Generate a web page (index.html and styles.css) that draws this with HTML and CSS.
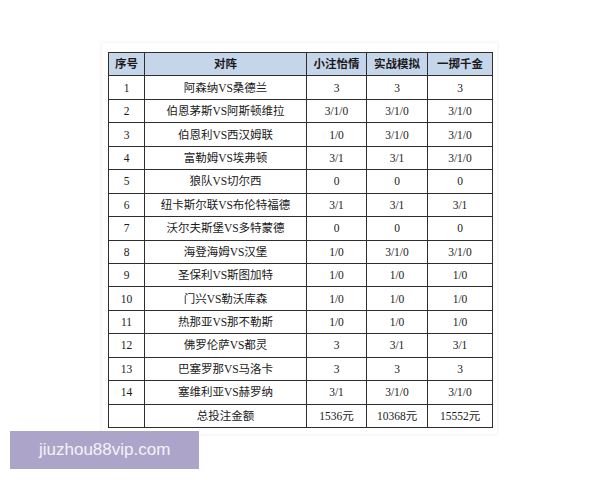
FILE: index.html
```html
<!DOCTYPE html>
<html lang="zh">
<head>
<meta charset="utf-8">
<link rel="stylesheet" href="styles.css">
</head>
<body>
<div class="frame">
<table class="bets">
<colgroup>
<col class="c-no"><col class="c-match"><col class="c-a"><col class="c-b"><col class="c-c">
</colgroup>
<thead>
<tr><th>序号</th><th>对阵</th><th>小注怡情</th><th>实战模拟</th><th>一掷千金</th></tr>
</thead>
<tbody>
<tr><td>1</td><td>阿森纳VS桑德兰</td><td>3</td><td>3</td><td>3</td></tr>
<tr><td>2</td><td>伯恩茅斯VS阿斯顿维拉</td><td>3/1/0</td><td>3/1/0</td><td>3/1/0</td></tr>
<tr><td>3</td><td>伯恩利VS西汉姆联</td><td>1/0</td><td>3/1/0</td><td>3/1/0</td></tr>
<tr><td>4</td><td>富勒姆VS埃弗顿</td><td>3/1</td><td>3/1</td><td>3/1/0</td></tr>
<tr><td>5</td><td>狼队VS切尔西</td><td>0</td><td>0</td><td>0</td></tr>
<tr><td>6</td><td>纽卡斯尔联VS布伦特福德</td><td>3/1</td><td>3/1</td><td>3/1</td></tr>
<tr><td>7</td><td>沃尔夫斯堡VS多特蒙德</td><td>0</td><td>0</td><td>0</td></tr>
<tr><td>8</td><td>海登海姆VS汉堡</td><td>1/0</td><td>3/1/0</td><td>3/1/0</td></tr>
<tr><td>9</td><td>圣保利VS斯图加特</td><td>1/0</td><td>1/0</td><td>1/0</td></tr>
<tr><td>10</td><td>门兴VS勒沃库森</td><td>1/0</td><td>1/0</td><td>1/0</td></tr>
<tr><td>11</td><td>热那亚VS那不勒斯</td><td>1/0</td><td>1/0</td><td>1/0</td></tr>
<tr><td>12</td><td>佛罗伦萨VS都灵</td><td>3</td><td>3/1</td><td>3/1</td></tr>
<tr><td>13</td><td>巴塞罗那VS马洛卡</td><td>3</td><td>3</td><td>3</td></tr>
<tr><td>14</td><td>塞维利亚VS赫罗纳</td><td>3/1</td><td>3/1/0</td><td>3/1/0</td></tr>
<tr><td></td><td>总投注金额</td><td>1536元</td><td>10368元</td><td>15552元</td></tr>
</tbody>
</table>
</div>
<div class="watermark">jiuzhou88vip.com</div>
</body>
</html>
```
FILE: styles.css
```css
html, body {
  margin: 0;
  padding: 0;
  background: #ffffff;
}
body {
  width: 600px;
  height: 480px;
  position: relative;
  overflow: hidden;
  font-family: "Liberation Serif", "Noto Sans CJK SC", serif;
}
.frame {
  margin: 43px 0 0 102px;
  width: 384px;
  padding: 9px 5px 6px 6px;
  background: #ffffff;
  box-shadow: 0 0 3px 1px rgba(0, 0, 0, 0.06);
}
.bets {
  border-collapse: collapse;
  table-layout: fixed;
  width: 384px;
  color: #1a1a1a;
  font-size: 11.5px;
}
.c-no { width: 36px; }
.c-match { width: 162px; }
.c-a { width: 60px; }
.c-b { width: 61px; }
.c-c { width: 65px; }
.bets th, .bets td {
  border: 1px solid #2e2e2e;
  text-align: center;
  padding: 0;
  height: 22.45px;
  line-height: 14px;
}
.bets th {
  background: #c6d6ea;
  font-weight: bold;
  font-size: 11.5px;
  color: #1a1a1a;
}
.watermark {
  position: absolute;
  left: 10px;
  top: 431px;
  width: 189px;
  height: 38px;
  background: #ada5c9;
  color: #f4f2f8;
  font-family: "Liberation Sans", sans-serif;
  font-size: 17px;
  line-height: 38px;
  box-sizing: border-box;
  padding-left: 29px;
}
```
